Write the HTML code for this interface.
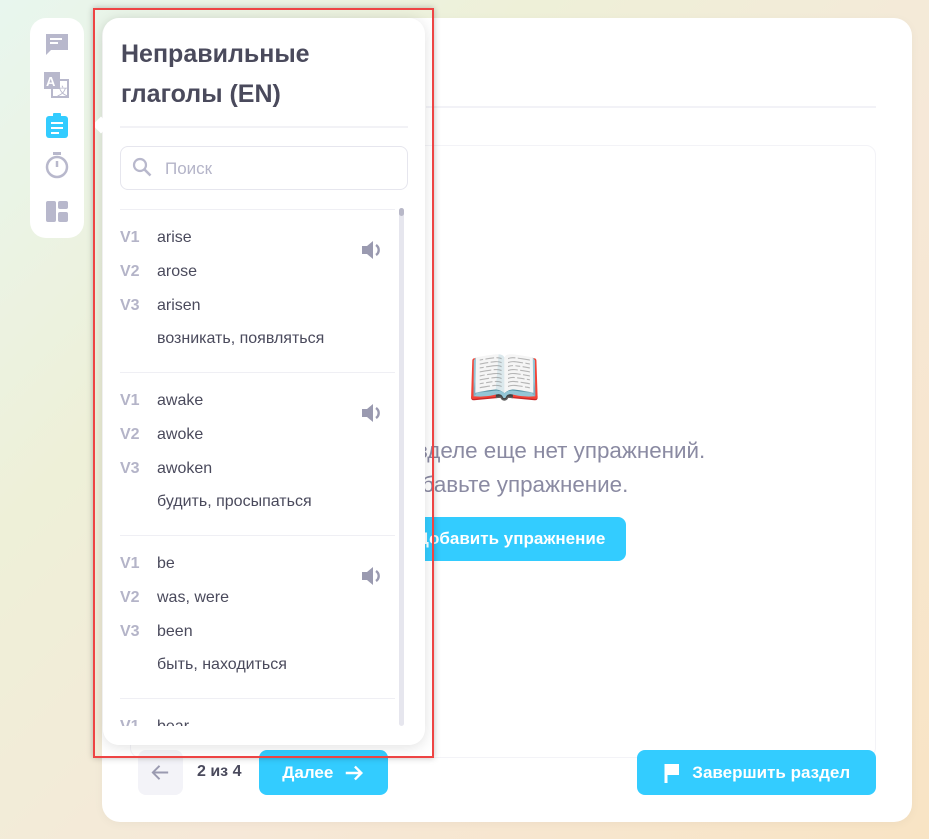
<!DOCTYPE html>
<html><head><meta charset="utf-8"><style>
*{box-sizing:border-box;margin:0;padding:0}
body{width:929px;height:839px;overflow:hidden;position:relative;font-family:"Liberation Sans","DejaVu Sans",sans-serif;
background:linear-gradient(135deg,#e8f6ee 0%,#eef0d8 30%,#f6e8d8 60%,#f8e4c4 100%);}
.abs{position:absolute}
.card{left:102px;top:18px;width:810px;height:804px;background:#fff;border-radius:18px;box-shadow:0 2px 10px rgba(0,0,0,.04)}
.hdiv{left:426px;top:106px;width:450px;height:2px;background:#f2f2f7}
.inner{left:130px;top:145px;width:746px;height:613px;border:1px solid #f3f3f7;border-radius:10px}
.msg{left:261px;width:500px;text-align:center;color:#8a8aa2;font-size:22.4px;white-space:nowrap}
.btn{background:#33ccff;color:#fff;font-weight:bold;border-radius:8px;font-size:16px;display:flex;align-items:center;justify-content:center}
.side{left:30px;top:18px;width:54px;height:220px;background:#fff;border-radius:16px}
.pop{left:103px;top:18px;width:322px;height:727px;background:#fff;border-radius:16px;box-shadow:0 2px 14px rgba(0,0,0,.12)}
.title{left:121px;top:34px;font-size:25px;font-weight:bold;color:#4a4a5c;line-height:40px}
.lbl{left:120px;font-size:16px;font-weight:bold;color:#b4b4c8}
.w{left:157px;font-size:16px;color:#4a4a5c}
.sep{left:120px;width:275px;height:1px;background:#efeff4}
.red{left:93px;top:8px;width:341px;height:750px;border:2px solid #ee4444;box-shadow:0 0 6px rgba(0,0,0,.25)}
</style></head><body>
<div class="abs card"></div>
<div class="abs hdiv"></div>
<div class="abs inner"></div>
<div class="abs" style="left:467px;top:343px;font-size:60px;line-height:70px;font-family:'DejaVu Sans',sans-serif">📖</div>
<div class="abs msg" style="top:438px">В этом разделе еще нет упражнений.</div>
<div class="abs msg" style="top:472px">Добавьте упражнение.</div>
<div class="abs btn" style="left:396px;top:517px;width:230px;height:44px;font-size:17px">Добавить упражнение</div>

<div class="abs" style="left:138px;top:750px;width:45px;height:45px;background:#f3f3f8;border-radius:8px"></div>
<svg class="abs" style="left:149px;top:761px" width="23" height="23" viewBox="0 0 24 24"><path d="M20 12H5M11 5l-7 7 7 7" stroke="#9a9ab0" stroke-width="2" fill="none"/></svg>
<div class="abs" style="left:197px;top:763px;font-size:16px;font-weight:bold;color:#4a4a5c">2 из 4</div>
<div class="abs btn" style="left:259px;top:750px;width:129px;height:45px;font-size:17px">Далее&nbsp;&nbsp;<svg width="22" height="22" viewBox="0 0 24 24"><path d="M3 12h16M13 5l7 7-7 7" stroke="#fff" stroke-width="2.6" fill="none"/></svg></div>
<div class="abs btn" style="left:637px;top:750px;width:239px;height:45px;font-size:17px"><svg width="20" height="22" viewBox="0 0 20 22"><path d="M3 2v19" stroke="#fff" stroke-width="3"/><path d="M4 2h12v11H4z" fill="#fff"/></svg>&nbsp;&nbsp;Завершить раздел</div>

<div class="abs side"></div>
<svg class="abs" style="left:45px;top:33px" width="24" height="24" viewBox="0 0 24 24"><path d="M1 1h22v16H6l-5 5z" fill="#b8b8cc"/><path d="M5 6h12M5 10h8" stroke="#fff" stroke-width="2"/></svg>
<svg class="abs" style="left:44px;top:72px" width="26" height="26" viewBox="0 0 26 26"><rect x="0" y="0" width="16" height="17" fill="#b8b8cc"/><rect x="8" y="8" width="16" height="17" fill="none" stroke="#b8b8cc" stroke-width="2"/><text x="2" y="14" font-size="13" font-weight="bold" fill="#fff" font-family="Liberation Sans">A</text><text x="13" y="23" font-size="11" fill="#b8b8cc" font-family="Liberation Sans">文</text></svg>
<svg class="abs" style="left:46px;top:113px" width="22" height="25" viewBox="0 0 22 25"><rect x="0" y="3" width="22" height="22" rx="3" fill="#33ccff"/><rect x="7" y="0" width="8" height="5" rx="1" fill="#33ccff"/><path d="M5 10h12M5 15h12M5 20h8" stroke="#fff" stroke-width="2"/></svg>
<svg class="abs" style="left:45px;top:152px" width="24" height="27" viewBox="0 0 24 27"><rect x="8" y="0" width="8" height="3" fill="#b8b8cc"/><circle cx="12" cy="15" r="10" fill="none" stroke="#b8b8cc" stroke-width="2.5"/><path d="M12 15V9" stroke="#b8b8cc" stroke-width="2.5"/></svg>
<svg class="abs" style="left:46px;top:201px" width="22" height="21" viewBox="0 0 22 21"><rect x="0" y="0" width="10" height="21" rx="2" fill="#b8b8cc"/><rect x="12" y="0" width="10" height="8" rx="2" fill="#b8b8cc"/><rect x="12" y="11" width="10" height="10" rx="2" fill="#b8b8cc"/></svg>

<div class="abs pop"></div>
<div class="abs" style="left:95px;top:119px;width:12px;height:12px;background:#fff;transform:rotate(45deg)"></div>
<div class="abs title">Неправильные<br>глаголы (EN)</div>
<div class="abs" style="left:120px;top:126px;width:288px;height:2px;background:#f2f2f6"></div>
<div class="abs" style="left:120px;top:146px;width:288px;height:44px;border:1px solid #e6e6ee;border-radius:8px"></div>
<svg class="abs" style="left:132px;top:157px" width="22" height="22" viewBox="0 0 22 22"><circle cx="8" cy="8" r="6" fill="none" stroke="#b8b8cc" stroke-width="2.2"/><path d="M12.5 12.5l6 6" stroke="#b8b8cc" stroke-width="2.6"/></svg>
<div class="abs" style="left:165px;top:159px;font-size:17px;color:#b4b4c8">Поиск</div>
<div class="abs sep" style="top:209px"></div>
<div class="abs" style="left:399px;top:208px;width:5px;height:518px;background:#e6e6ee;border-radius:3px"></div>
<div class="abs" style="left:399px;top:208px;width:5px;height:8px;background:#b8b8c8;border-radius:3px"></div>

<div class="abs" style="left:103px;top:0;width:322px;height:745px;overflow:hidden">
<div style="position:absolute;left:-103px;top:0;width:929px;height:745px">
<div class="abs lbl" style="top:229px">V1</div><div class="abs w" style="top:229px">arise</div>
<div class="abs lbl" style="top:263px">V2</div><div class="abs w" style="top:263px">arose</div>
<div class="abs lbl" style="top:297px">V3</div><div class="abs w" style="top:297px">arisen</div>
<div class="abs w" style="top:330px">возникать, появляться</div>
<div class="abs sep" style="top:372px"></div>
<div class="abs lbl" style="top:392px">V1</div><div class="abs w" style="top:392px">awake</div>
<div class="abs lbl" style="top:426px">V2</div><div class="abs w" style="top:426px">awoke</div>
<div class="abs lbl" style="top:460px">V3</div><div class="abs w" style="top:460px">awoken</div>
<div class="abs w" style="top:493px">будить, просыпаться</div>
<div class="abs sep" style="top:535px"></div>
<div class="abs lbl" style="top:555px">V1</div><div class="abs w" style="top:555px">be</div>
<div class="abs lbl" style="top:589px">V2</div><div class="abs w" style="top:589px">was, were</div>
<div class="abs lbl" style="top:623px">V3</div><div class="abs w" style="top:623px">been</div>
<div class="abs w" style="top:656px">быть, находиться</div>
<div class="abs sep" style="top:698px"></div>
<div class="abs lbl" style="top:718px">V1</div><div class="abs w" style="top:718px">bear</div>
</div></div>
<div class="abs" style="left:103px;top:726px;width:322px;height:19px;background:#fff;border-radius:0 0 16px 16px"></div>
<svg class="abs" style="left:361px;top:239px" width="22" height="22" viewBox="0 0 22 22"><path d="M1 7h5l6-5v18l-6-5H1z" fill="#9a9ab0"/><path d="M15 6a6 6 0 0 1 0 10" stroke="#9a9ab0" stroke-width="2.4" fill="none"/></svg>
<svg class="abs" style="left:361px;top:402px" width="22" height="22" viewBox="0 0 22 22"><path d="M1 7h5l6-5v18l-6-5H1z" fill="#9a9ab0"/><path d="M15 6a6 6 0 0 1 0 10" stroke="#9a9ab0" stroke-width="2.4" fill="none"/></svg>
<svg class="abs" style="left:361px;top:565px" width="22" height="22" viewBox="0 0 22 22"><path d="M1 7h5l6-5v18l-6-5H1z" fill="#9a9ab0"/><path d="M15 6a6 6 0 0 1 0 10" stroke="#9a9ab0" stroke-width="2.4" fill="none"/></svg>
<div class="abs red"></div>
</body></html>
